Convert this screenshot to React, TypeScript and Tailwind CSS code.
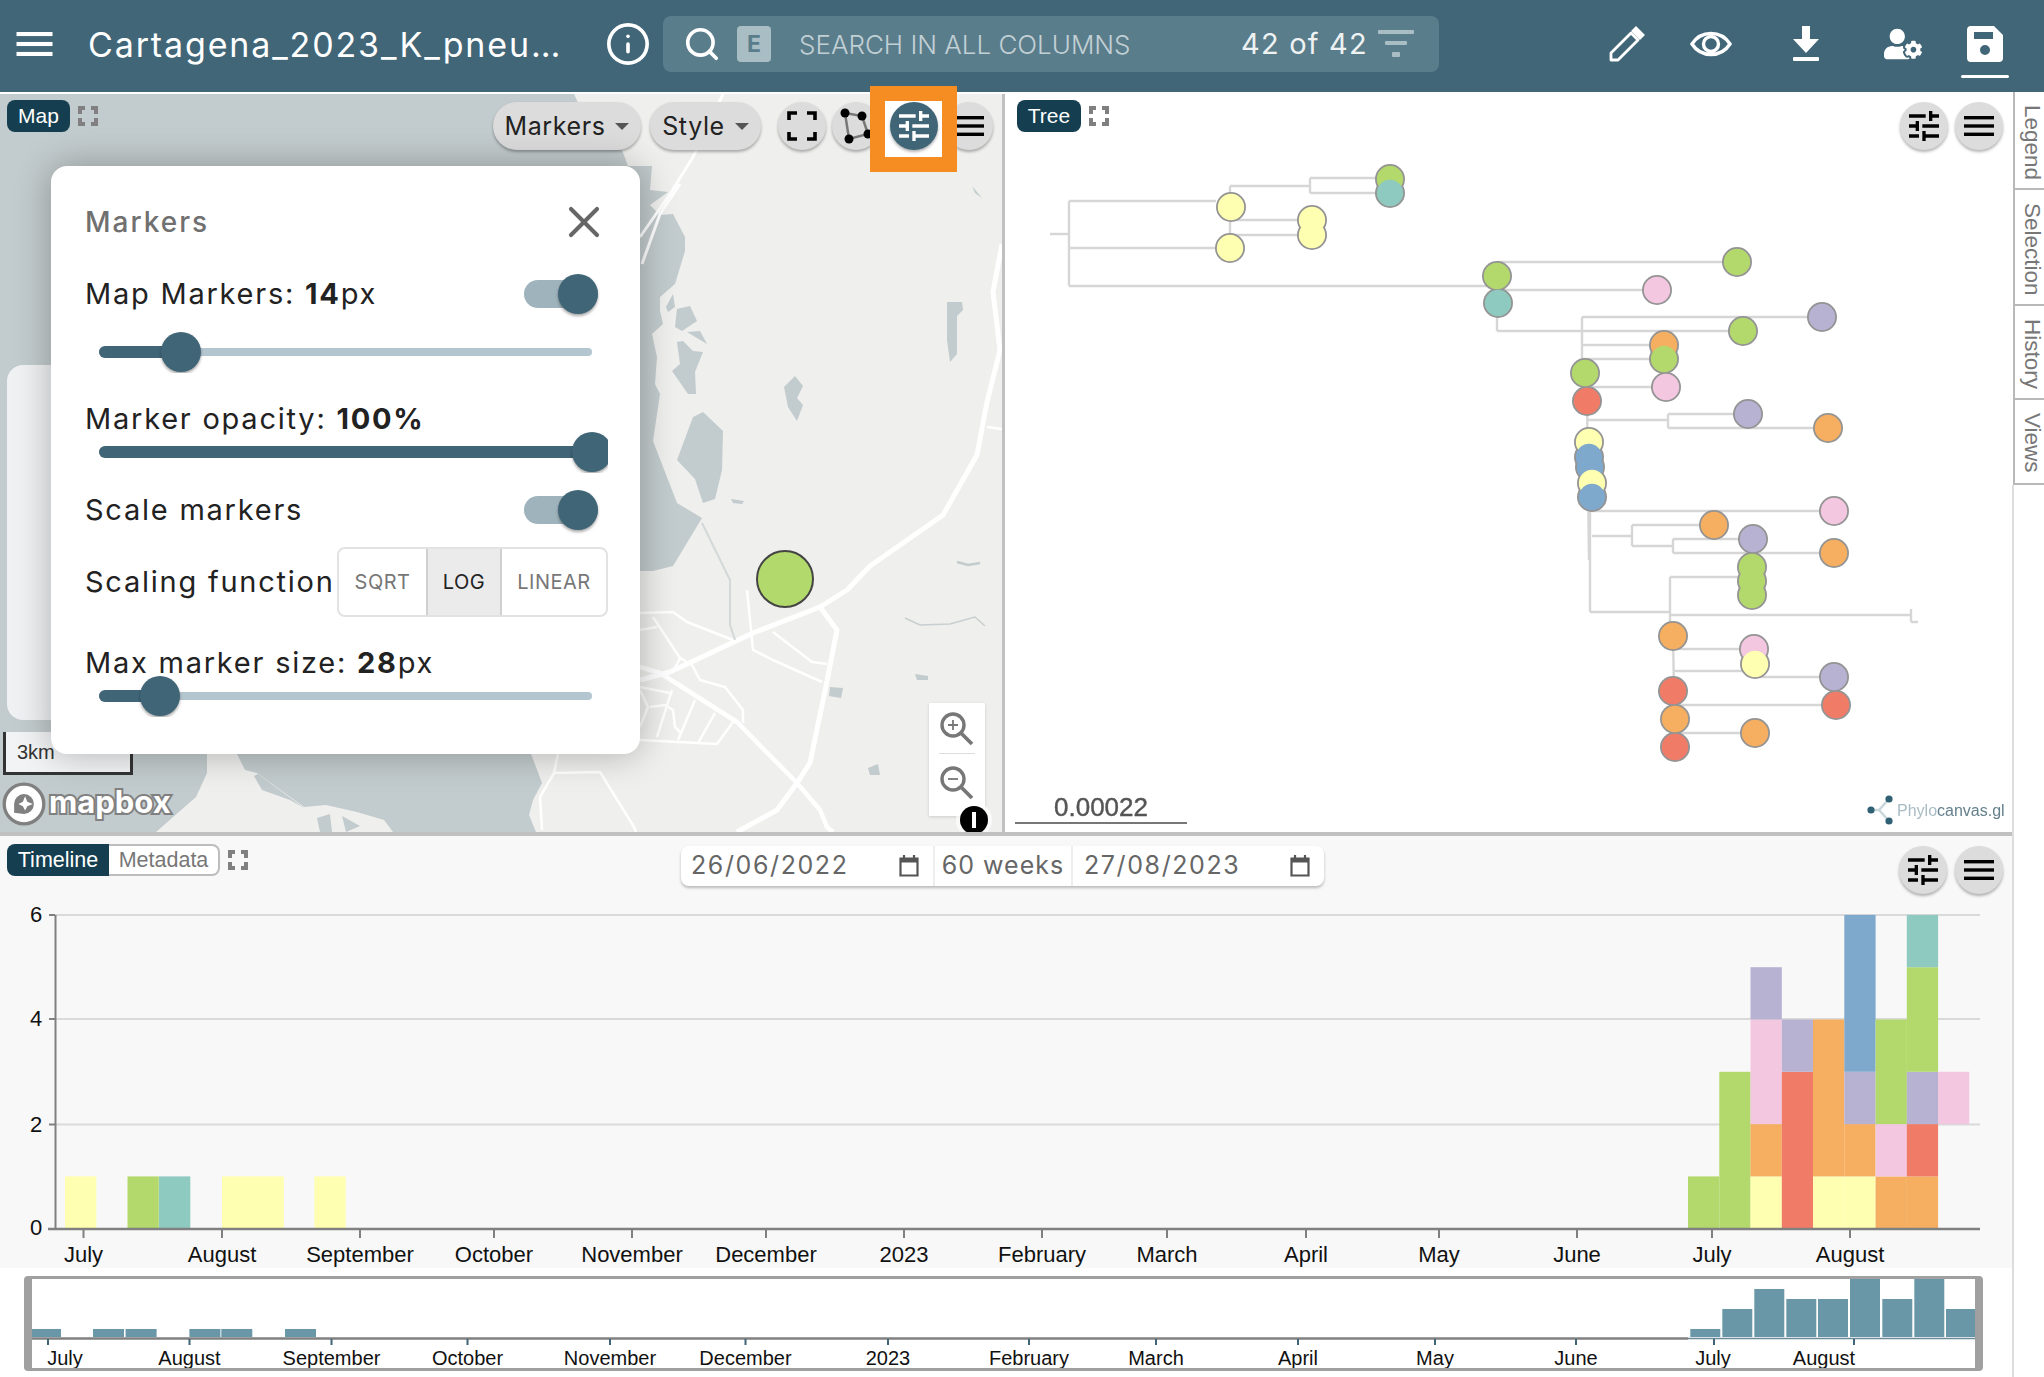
import { Info, Search, X } from 'lucide-react';
import { FaUserCog } from 'react-icons/fa';

const GREEN = '#b3d96c';
const TEAL = '#8ecabf';
const YELLOW = '#ffffb1';
const PURPLE = '#b7b2d2';
const RED = '#f07c68';
const BLUE = '#7fa9cc';
const ORANGE = '#f6af60';
const PINK = '#f4c7e1';

function TuneIcon({ className }: { className?: string }) {
  return (
    <svg viewBox="0 0 24 24" className={className} fill="currentColor">
      <path d="M3 17v2h6v-2H3zM3 5v2h10V5H3zm10 16v-2h8v-2h-8v-2h-2v6h2zM7 9v2H3v2h4v2h2V9H7zm14 4v-2H11v2h10zm-6-4h2V7h4V5h-4V3h-2v6z" />
    </svg>
  );
}

function MenuIcon({ className }: { className?: string }) {
  return (
    <svg viewBox="0 0 30 20" className={className} fill="currentColor">
      <rect x="0" y="0" width="30" height="3.4" />
      <rect x="0" y="8.3" width="30" height="3.4" />
      <rect x="0" y="16.6" width="30" height="3.4" />
    </svg>
  );
}

function ExpandIcon() {
  return (
    <svg viewBox="0 0 20 20" className="h-5 w-5 shrink-0 text-[#808080]" fill="none" stroke="currentColor" strokeWidth="4">
      <path d="M2 8V2h5M13 2h5v6M18 12v6h-5M7 18H2v-6" />
    </svg>
  );
}

function CalendarIcon() {
  return (
    <svg viewBox="0 0 20 22" className="h-[22px] w-5 text-[#555]" fill="none" stroke="currentColor" strokeWidth="2.2">
      <path d="M1.5 3.5h17v17h-17zM1.5 4.5h17" />
      <path d="M1.5 5.5h17" strokeWidth="4" />
      <path d="M5 0v3M15 0v3" />
    </svg>
  );
}

function RoundButton({ children }: { children: React.ReactNode }) {
  return (
    <div className="flex h-12 w-12 shrink-0 items-center justify-center rounded-full bg-[#dcdcdc] text-black shadow-[0_2px_3px_rgba(0,0,0,0.3)]">
      {children}
    </div>
  );
}

function Pill({ label, width }: { label: string; width: string }) {
  return (
    <div className={`flex h-12 items-center justify-center gap-[10px] rounded-full bg-[#dcdcdc] pt-px text-[25px] tracking-[0.6px] text-[#222] shadow-[0_2px_3px_rgba(0,0,0,0.3)] ${width}`}>
      {label}
      <span className="h-0 w-0 border-x-[7px] border-t-[7px] border-x-transparent border-t-[#555]" />
    </div>
  );
}

function Tab({ label, width }: { label: string; width: string }) {
  return <div className={`flex h-8 items-center justify-center rounded-lg bg-[#153f50] font-['Liberation_Sans',sans-serif] text-[21px] text-white ${width}`}>{label}</div>;
}

function Toggle() {
  return (
    <div className="relative ml-auto mr-[10px] h-7 w-[74px] rounded-full bg-[#9fb3bc]">
      <div className="absolute -top-[6px] right-0 h-10 w-10 rounded-full bg-[#3f6577] shadow-[0_2px_3px_rgba(0,0,0,0.35)]" />
    </div>
  );
}

function Slider({ thumb, className }: { thumb: number; className?: string }) {
  return (
    <div className={`relative h-[42px] w-[523px] overflow-hidden ${className ?? ''}`}>
      <div className="absolute left-[14px] top-[17px] h-2 w-[493px] rounded-full bg-[#b3c5ce]" />
      <div className="absolute left-[14px] top-[15px] h-3 rounded-full bg-[#3f6577]" style={{ width: thumb }} />
      <div className="absolute top-px h-10 w-10 rounded-full bg-[#3f6577] shadow-[0_2px_3px_rgba(0,0,0,0.35)]" style={{ left: thumb - 6 }} />
    </div>
  );
}

function MarkersPanel() {
  return (
    <div className="absolute left-[51px] top-[72px] flex w-[589px] flex-col rounded-2xl bg-white pb-[37px] pl-[34px] pr-[32px] pt-9 text-[29px] tracking-[1.76px] text-[#222] shadow-[0_0_36px_rgba(0,0,0,0.28)]">
      <div className="flex h-10 items-center justify-between text-[28px] font-medium tracking-[2px] text-[#707070]">
        Markers
        <X className="-my-[6px] -mr-[2px] h-[52px] w-[52px] shrink-0 text-[#666]" strokeWidth={1.9} />
      </div>
      <div className="mt-[39px] flex h-[26px] items-center">
        <span>Map Markers: <b>14</b>px</span>
        <Toggle />
      </div>
      <Slider thumb={82} className="mt-6" />
      <div className="mt-[33px] flex h-[26px] items-center">
        <span>Marker opacity: <b>100%</b></span>
      </div>
      <Slider thumb={493} className="-mt-px" />
      <div className="mt-6 flex h-[26px] items-center">
        <span>Scale markers</span>
        <Toggle />
      </div>
      <div className="mt-6 flex h-[70px] items-center">
        <span className="w-[252px] shrink-0 whitespace-nowrap">Scaling function</span>
        <div className="flex h-[70px] w-[271px] rounded-lg border-2 border-[#e2e2e2] text-[20px] tracking-[0.5px] text-[#777]">
          <div className="flex w-[87px] items-center justify-center">SQRT</div>
          <div className="flex w-[76px] items-center justify-center border-x-2 border-[#d0d0d0] bg-[#ebebeb] text-[#222]">LOG</div>
          <div className="flex flex-1 items-center justify-center">LINEAR</div>
        </div>
      </div>
      <div className="mt-[33px] flex h-[26px] items-center">
        <span>Max marker size: <b>28</b>px</span>
      </div>
      <Slider thumb={61} className="-mt-px" />
    </div>
  );
}

const LAKES = [
  '677,460 693,417 703,412 723,431 722,470 715,499 703,503 695,479',
  '677,342 683,341 693,351 703,352 695,372 696,394 688,394 672,371 680,364',
  '675,327 677,309 690,306 697,321 682,331',
  '666,307 673,294 675,307 668,312',
  '687,332 700,331 707,344',
  '784,387 795,376 803,386 797,398 803,405 797,421 788,407',
  '947,302 962,302 963,310 957,316 957,354 950,362 947,340',
  '731,499 744,501 742,504 733,503',
  '830,687 843,688 841,698 829,696',
  '868,768 878,764 880,775 870,775',
  '972,186 982,198 975,193',
  '915,674 928,676 928,680 917,680',
  '254,776 258,774 304,808 290,800 262,790',
  '317,818 330,814 332,832 320,832',
  '342,816 360,826 346,832',
];

const THIN_ROADS = [
  '640,613 673,612 687,622 733,640',
  '653,617 680,658',
  '673,672 680,658 692,665 700,680 725,687 743,710 743,723',
  '747,590 750,620 753,650 773,660 822,682',
  '773,632 812,662 827,664',
  '640,740 717,744 733,722',
  '672,690 657,737',
  '695,700 678,740',
  '715,713 698,743',
  '650,707 665,705 673,710 675,727 680,732',
  '640,687 670,693',
  '640,630 657,627',
  '640,690 648,707 640,727',
  '987,427 1002,429',
  '558,754 554,773 540,797 542,830',
  '554,773 600,772 634,827 636,832',
];

function MapCanvas() {
  return (
    <svg viewBox="0 94 1002 738" className="absolute inset-0 h-full w-full">
      <rect x="0" y="94" width="1002" height="738" fill="#efefed" />
      <path d="M0 94H574L600 150L622 150L628 166L652 166L650 190L668 192L650 205L660 215L673 214L685 237L685 251L675 284L660 297L660 311L663 324L652 334L657 357L655 384L660 394L653 441L677 503L702 518L673 566L653 571L640 571V700L531 754L536 767L542 783L533 800L529 815L536 832H0Z" fill="#c2cbcd" />
      <polygon points="207,754 237,754 245,770 257,773 304,807 326,805 357,812 384,820 393,832 156,832 196,797 207,773" fill="#efefed" />
      {LAKES.map((points) => (
        <polygon key={points} points={points} fill="#c2cbcd" />
      ))}
      <g fill="none" stroke="#fff" strokeLinejoin="round">
        <polyline points="1002,244 993,292 1000,350 987,402 977,455 943,515 870,566 847,590 820,607 753,633 670,672 640,680" strokeWidth="5" />
        <polyline points="820,607 837,630 827,681 810,763 797,783 777,810 737,832" strokeWidth="5" />
        <polyline points="640,667 660,673 737,722 797,783 820,810 827,827 833,832" strokeWidth="4.5" />
        <polyline points="723,94 693,157 670,194 640,237" strokeWidth="3" />
        <polyline points="680,184 660,214 642,264" strokeWidth="3" />
        {THIN_ROADS.map((points) => (
          <polyline key={points} points={points} strokeWidth="2.5" />
        ))}
      </g>
      <polyline points="702,523 730,580 730,625 735,640" fill="none" stroke="#d3d8d8" strokeWidth="2" />
      <polyline points="905,618 920,625 950,624 975,617 985,626" fill="none" stroke="#c8cfd0" strokeWidth="1.5" />
      <polyline points="957,562 968,565 980,563" fill="none" stroke="#c2cbcd" strokeWidth="2.5" />
      <circle cx="785" cy="579" r="28" fill="#b2d96b" stroke="#444" strokeWidth="2" />
    </svg>
  );
}

const BRANCHES = [
  [1050, 234, 1069, 234], [1069, 201, 1069, 286], [1069, 201, 1216, 201], [1069, 248, 1216, 248], [1069, 286, 1497, 286],
  [1230, 186, 1230, 248], [1230, 186, 1310, 186], [1310, 178, 1310, 193], [1310, 178, 1390, 178], [1310, 193, 1390, 193],
  [1230, 220, 1311, 220], [1230, 235, 1311, 235], [1497, 262, 1737, 262], [1497, 290, 1657, 290], [1497, 290, 1497, 331],
  [1497, 331, 1743, 331], [1582, 317, 1582, 372], [1582, 317, 1822, 317], [1582, 345, 1664, 345], [1582, 359, 1664, 359],
  [1585, 387, 1665, 387], [1587, 400, 1589, 560], [1587, 420, 1668, 420], [1668, 414, 1668, 428], [1668, 414, 1748, 414],
  [1668, 428, 1828, 428], [1592, 511, 1834, 511], [1590, 498, 1590, 612], [1592, 536, 1632, 536], [1632, 525, 1632, 546],
  [1632, 525, 1714, 525], [1632, 546, 1673, 546], [1673, 539, 1673, 553], [1673, 539, 1753, 539], [1673, 553, 1834, 553],
  [1590, 612, 1670, 612], [1670, 577, 1670, 645], [1670, 577, 1752, 577], [1670, 615, 1911, 615], [1911, 609, 1911, 622],
  [1911, 622, 1918, 622], [1673, 636, 1675, 747], [1673, 649, 1754, 649], [1673, 671, 1755, 671], [1755, 677, 1834, 677],
  [1673, 705, 1835, 705], [1675, 733, 1754, 733],
];

const NODES: [number, number, string][] = [
  [1231, 207, YELLOW], [1230, 248, YELLOW], [1312, 220, YELLOW], [1312, 235, YELLOW], [1390, 179, GREEN], [1390, 193, TEAL],
  [1497, 276, GREEN], [1498, 303, TEAL], [1737, 262, GREEN], [1657, 290, PINK], [1822, 317, PURPLE], [1743, 331, GREEN],
  [1664, 345, ORANGE], [1664, 359, GREEN], [1585, 373, GREEN], [1587, 401, RED], [1666, 387, PINK], [1748, 414, PURPLE],
  [1828, 428, ORANGE], [1589, 442, YELLOW], [1589, 457, BLUE], [1590, 467, BLUE], [1592, 483, YELLOW], [1592, 497, BLUE],
  [1834, 511, PINK], [1714, 525, ORANGE], [1753, 539, PURPLE], [1834, 553, ORANGE], [1752, 567, GREEN], [1752, 581, GREEN],
  [1752, 595, GREEN], [1673, 636, ORANGE], [1754, 649, PINK], [1755, 664, YELLOW], [1834, 677, PURPLE], [1836, 705, RED],
  [1673, 691, RED], [1675, 719, ORANGE], [1755, 733, ORANGE], [1675, 747, RED],
];

function TreeCanvas() {
  return (
    <svg viewBox="1005 94 1007 738" className="absolute inset-0 h-full w-full blur-[0.6px]">
      <g stroke="#d6d6d6" strokeWidth="2.4">
        {BRANCHES.map(([x1, y1, x2, y2]) => (
          <line key={`${x1}-${y1}-${x2}-${y2}`} x1={x1} y1={y1} x2={x2} y2={y2} />
        ))}
      </g>
      {/* outlines first so touching nodes merge into one shape */}
      {NODES.map(([cx, cy]) => (
        <circle key={`${cx}-${cy}`} cx={cx} cy={cy} r="15" fill="#949494" />
      ))}
      {NODES.map(([cx, cy, fill]) => (
        <circle key={`${cx}-${cy}`} cx={cx} cy={cy} r="13.2" fill={fill} />
      ))}
      <text x="1054" y="816" className="font-['Liberation_Sans',sans-serif] text-[26px]" fill="#555" stroke="#555" strokeWidth="0.4">0.00022</text>
      <line x1="1015" y1="823" x2="1187" y2="823" stroke="#777" strokeWidth="2" />
      <g fill="none" stroke="#c9d6da" strokeWidth="2.5">
        <path d="M1871 810h8l10-11M1879 810l10 11" />
      </g>
      <circle cx="1871" cy="810" r="3.6" fill="#2f6074" />
      <circle cx="1889" cy="799" r="3.6" fill="#2f6074" />
      <circle cx="1889" cy="821" r="3.6" fill="#2f6074" />
      <text x="1897" y="816" className="font-['Liberation_Sans',sans-serif] text-[16px]" fill="#a9bcc4">
        Phylo<tspan fill="#64808c">canvas.gl</tspan>
      </text>
    </svg>
  );
}

const BIN_X = [1688, 1719.3, 1750.5, 1781.8, 1813, 1844.3, 1875.6, 1906.8, 1938];
const BARS: [number, number, number, string][] = [
  [65, 0, 1, YELLOW], [127.5, 0, 1, GREEN], [159, 0, 1, TEAL], [222, 0, 1, YELLOW], [252.5, 0, 1, YELLOW], [314.4, 0, 1, YELLOW],
  [BIN_X[0], 0, 1, GREEN], [BIN_X[1], 0, 3, GREEN],
  [BIN_X[2], 0, 1, YELLOW], [BIN_X[2], 1, 2, ORANGE], [BIN_X[2], 2, 4, PINK], [BIN_X[2], 4, 5, PURPLE],
  [BIN_X[3], 0, 3, RED], [BIN_X[3], 3, 4, PURPLE],
  [BIN_X[4], 0, 1, YELLOW], [BIN_X[4], 1, 4, ORANGE],
  [BIN_X[5], 0, 1, YELLOW], [BIN_X[5], 1, 2, ORANGE], [BIN_X[5], 2, 3, PURPLE], [BIN_X[5], 3, 6, BLUE],
  [BIN_X[6], 0, 1, ORANGE], [BIN_X[6], 1, 2, PINK], [BIN_X[6], 2, 4, GREEN],
  [BIN_X[7], 0, 1, ORANGE], [BIN_X[7], 1, 2, RED], [BIN_X[7], 2, 3, PURPLE], [BIN_X[7], 3, 5, GREEN], [BIN_X[7], 5, 6, TEAL],
  [BIN_X[8], 2, 3, PINK],
];

const barY = (value: number) => 1228.7 - 52.3 * value;

const MAIN_TICKS: [number, string][] = [
  [83.5, 'July'], [222, 'August'], [360, 'September'], [494, 'October'], [632, 'November'], [766, 'December'], [904, '2023'],
  [1042, 'February'], [1167, 'March'], [1306, 'April'], [1439, 'May'], [1577, 'June'], [1712, 'July'], [1850, 'August'],
];

function TimelineChart() {
  return (
    <svg viewBox="0 836 2012 432" className="absolute inset-0 h-full w-full font-['Liberation_Sans',sans-serif] text-[22px]">
      <g stroke="#dadada" strokeWidth="2">
        <line x1="55" y1="915" x2="1980" y2="915" />
        <line x1="55" y1="1019" x2="1980" y2="1019" />
        <line x1="55" y1="1124.5" x2="1980" y2="1124.5" />
      </g>
      {BARS.map(([x, from, to, fill]) => (
        <rect key={`${x}-${from}`} x={x} y={barY(to)} width="31.3" height={(to - from) * 52.3} fill={fill} />
      ))}
      <g stroke="#808080" strokeWidth="2">
        <line x1="55.5" y1="915" x2="55.5" y2="1229" />
        <line x1="48" y1="1229" x2="1980" y2="1229" strokeWidth="2.5" />
        <line x1="49" y1="915" x2="55" y2="915" />
        <line x1="49" y1="1019" x2="55" y2="1019" />
        <line x1="49" y1="1124.5" x2="55" y2="1124.5" />
        {MAIN_TICKS.map(([x, label]) => (
          <line key={`${x}${label}`} x1={x} y1="1229" x2={x} y2="1238" />
        ))}
      </g>
      {[['6', 915], ['4', 1019], ['2', 1124.5], ['0', 1228]].map(([label, y]) => (
        <text key={label} x="30" y={Number(y) + 7} fill="#111">{label}</text>
      ))}
      {MAIN_TICKS.map(([x, label]) => (
        <text key={`${x}${label}`} x={x} y="1262" textAnchor="middle" fill="#111">{label}</text>
      ))}
    </svg>
  );
}

const NAV_BARS: [number, number][] = [
  [31, 30], [93, 31], [125.6, 31], [189.4, 31], [221.3, 31], [285, 31],
];
const NAV_RIGHT: [number, number][] = [
  [1690.3, 8], [1722.3, 28], [1754.3, 48], [1786.3, 38], [1818, 38], [1850, 58], [1882.3, 38], [1914.3, 58], [1946, 28],
];
const NAV_TICKS: [number, number, string][] = [
  [48, 65, 'July'], [189.5, 189.5, 'August'], [331.5, 331.5, 'September'], [467.5, 467.5, 'October'], [610, 610, 'November'],
  [745.5, 745.5, 'December'], [888, 888, '2023'], [1029, 1029, 'February'], [1156, 1156, 'March'], [1298, 1298, 'April'],
  [1435, 1435, 'May'], [1576, 1576, 'June'], [1714, 1713, 'July'], [1854, 1824, 'August'],
];

function NavChart() {
  return (
    <svg viewBox="32 1279 1943 89" className="block h-[89px] w-[1943px] font-['Liberation_Sans',sans-serif] text-[20px]">
      <line x1="32" y1="1338.5" x2="1688" y2="1338.5" stroke="#808080" strokeWidth="2.5" />
      <line x1="1688" y1="1338.5" x2="1975" y2="1338.5" stroke="#6b8a98" strokeWidth="1.5" />
      {NAV_BARS.map(([x, width]) => (
        <rect key={x} x={x} y="1329" width={width} height="8" fill="#6a97a8" />
      ))}
      {NAV_RIGHT.map(([x, height]) => (
        <rect key={x} x={x} y={1337 - height} width="30" height={height} fill="#6a97a8" />
      ))}
      {NAV_TICKS.map(([tick, x, label]) => (
        <g key={`${tick}${label}`}>
          <line x1={tick} y1="1339" x2={tick} y2="1345" stroke="#3f6577" strokeWidth="2" />
          <text x={x} y="1365" textAnchor="middle" fill="#111">{label}</text>
        </g>
      ))}
    </svg>
  );
}

function Header() {
  return (
    <header className="flex h-[92px] shrink-0 items-center bg-[#406678] pb-1 pl-4 text-white">
      <MenuIcon className="h-6 w-[37px] shrink-0" />
      <div className="ml-[35px] w-[473px] shrink-0 whitespace-nowrap text-[34px] tracking-[1.86px]">Cartagena_2023_K_pneu…</div>
      <Info className="ml-[47px] h-[46px] w-[46px] shrink-0 -translate-x-[3px]" strokeWidth={1.9} />
      <div className="ml-[9px] flex h-14 w-[776px] shrink-0 items-center rounded-lg bg-[#5a7d8b] pl-5">
        <Search className="h-[38px] w-[38px] shrink-0" strokeWidth={2.3} />
        <div className="ml-4 flex h-9 w-[34px] shrink-0 items-center justify-center rounded bg-[#a9bdc4] text-[23px] font-bold text-[#5a7d8b]">E</div>
        <div className="ml-7 w-[442px] shrink-0 whitespace-nowrap text-[26px] font-light text-[#c2d0d5]">SEARCH IN ALL COLUMNS</div>
        <div className="w-[126px] shrink-0 whitespace-nowrap text-[29px] tracking-[1.2px] text-[#eef2f3]">42 of 42</div>
        <svg viewBox="0 0 36 28" className="ml-[11px] h-7 w-9 shrink-0 text-[#a9bdc4]" fill="currentColor">
          <rect x="0" y="0" width="36" height="4" rx="1" />
          <rect x="7" y="11" width="22" height="4" rx="1" />
          <rect x="14" y="22" width="8" height="5" rx="1" />
        </svg>
      </div>
      <svg viewBox="0 0 36 36" className="ml-[170px] h-9 w-9 shrink-0" fill="none" stroke="currentColor" strokeWidth="2.8">
        <path d="M2 34V27L22 7L29 14L9 34Z" strokeLinejoin="round" />
        <path d="M27 2L34 9L31 12L24 5Z" fill="currentColor" />
      </svg>
      <svg viewBox="0 0 42 30" className="ml-[45px] h-[30px] w-[42px] shrink-0" fill="none" stroke="currentColor" strokeWidth="3.4">
        <path d="M2 15C11 1 31 1 40 15C31 29 11 29 2 15Z" />
        <circle cx="21" cy="15" r="7.5" />
      </svg>
      <svg viewBox="0 0 26 36" className="ml-[61px] h-9 w-[26px] shrink-0" fill="currentColor">
        <path d="M9 0H17V13H26L13 27L0 13H9Z" />
        <rect x="0" y="31" width="26" height="4" rx="1" />
      </svg>
      <FaUserCog className="ml-[65px] h-[36px] w-[38px] shrink-0" />
      <div className="relative ml-[45px] h-9 w-9 shrink-0">
        <svg viewBox="0 0 36 36" className="h-9 w-9" fill="currentColor">
          <path fillRule="evenodd" d="M4 0H27L36 9V32A4 4 0 0 1 32 36H4A4 4 0 0 1 0 32V4A4 4 0 0 1 4 0ZM7 6V13H26V6ZM18 19A5 5 0 1 0 18 29A5 5 0 1 0 18 19Z" />
        </svg>
        <div className="absolute -left-[6px] top-[49px] h-[3px] w-12 rounded-sm bg-white" />
      </div>
    </header>
  );
}

function SideTab({ label, height }: { label: string; height: string }) {
  return (
    <div className={`ml-px flex justify-center border-b-2 border-l-2 border-[#b9b9b9] pl-[5px] pt-[13px] ${height}`}>
      <span className="font-['Liberation_Sans',sans-serif] text-[22.5px] leading-none text-[#777] [writing-mode:vertical-rl]">{label}</span>
    </div>
  );
}

export default function App() {
  return (
    <div className="relative flex h-[1377px] w-[2044px] flex-col overflow-hidden bg-white font-['Inter',sans-serif]">
      <Header />
      <div className="flex min-h-0 flex-1">
        <div className="flex w-[2012px] shrink-0 flex-col pt-[2px]">
          <div className="flex h-[742px] shrink-0 border-b-4 border-[#c0c0c0]">
            <section className="relative w-[1002px] shrink-0 overflow-hidden">
              <MapCanvas />
              <div className="absolute left-[7px] top-[6px] flex gap-2">
                <Tab label="Map" width="w-[63px]" />
                <div className="mt-[6px]"><ExpandIcon /></div>
              </div>
              <div className="absolute left-[493px] top-2 flex">
                <Pill label="Markers" width="w-[148px]" />
                <div className="ml-[9px]"><Pill label="Style" width="w-[111px]" /></div>
                <div className="ml-[17px]">
                  <RoundButton>
                    <svg viewBox="0 0 30 30" className="h-[30px] w-[30px]" fill="none" stroke="currentColor" strokeWidth="3.6">
                      <path d="M2 9V2h8M20 2h8v7M28 21v7h-8M10 28H2v-7" />
                    </svg>
                  </RoundButton>
                </div>
                <div className="ml-[6px]">
                  <RoundButton>
                    <svg viewBox="0 0 36 36" className="h-9 w-9">
                      <path d="M7 5L24 8L30 26L11 31Z" fill="none" stroke="#777" strokeWidth="2.5" />
                      <circle cx="7" cy="5" r="4.5" /><circle cx="24" cy="8" r="4.5" /><circle cx="30" cy="26" r="4.5" /><circle cx="11" cy="31" r="4.5" />
                    </svg>
                  </RoundButton>
                </div>
                <div className="ml-[65px]">
                  <RoundButton><MenuIcon className="h-5 w-[30px]" /></RoundButton>
                </div>
              </div>
              <div className="absolute left-[7px] top-[271px] h-[355px] w-[60px] rounded-2xl bg-[#eff1f3]" />
              <div className="absolute left-[3px] top-[638px] flex h-[43px] w-[130px] items-center border-x-[3px] border-b-[3px] border-[#333] bg-[#f2f3f4] pl-[11px] font-['Liberation_Sans',sans-serif] text-[20px] text-[#333]">3km</div>
              <MarkersPanel />
              <div className="absolute left-[2px] top-[688px] flex items-center">
                <svg viewBox="0 0 40 40" className="h-11 w-11 shrink-0">
                  <circle cx="20" cy="20" r="18" fill="#fff" stroke="#808080" strokeWidth="3" />
                  <path d="M11 28V20A9 9 0 1 1 20 29Z" fill="#808080" />
                  <path d="M21 13L23 18L28 20L23 22L21 26L19 22L15 20L19 18Z" fill="#fff" />
                </svg>
                <svg viewBox="0 0 130 44" className="h-11 w-[130px]">
                  <text x="3" y="31" stroke="#808080" strokeWidth="4" fill="#fff" paintOrder="stroke" className="text-[31px] font-bold">mapbox</text>
                </svg>
              </div>
              <div className="absolute left-[929px] top-[609px] flex h-[113px] w-14 flex-col items-center bg-white shadow-[0_1px_3px_rgba(0,0,0,0.15)]">
                <svg viewBox="0 0 34 34" className="mt-[9px] h-[34px] w-[34px]" fill="none" stroke="#777" strokeWidth="3.4">
                  <circle cx="13" cy="13" r="11" /><path d="M21 21L32 32" strokeWidth="3.8" /><path d="M8 13h10M13 8v10" strokeWidth="1.8" />
                </svg>
                <div className="mt-[7px] h-px w-9 bg-[#ddd]" />
                <svg viewBox="0 0 34 34" className="mt-[12px] h-[34px] w-[34px]" fill="none" stroke="#777" strokeWidth="3.4">
                  <circle cx="13" cy="13" r="11" /><path d="M21 21L32 32" strokeWidth="3.8" /><path d="M8 13h10" strokeWidth="1.8" />
                </svg>
              </div>
              <div className="absolute left-[960px] top-[712px] flex h-7 w-7 items-center justify-center rounded-full bg-black ring-4 ring-white/70">
                <div className="h-4 w-1 bg-white" />
              </div>
            </section>
            <section className="relative flex-1 border-l-[3px] border-[#c0c0c0]">
              <TreeCanvas />
              <div className="absolute left-[12px] top-[6px] flex gap-2">
                <Tab label="Tree" width="w-16" />
                <div className="mt-[6px]"><ExpandIcon /></div>
              </div>
              <div className="absolute right-[9px] top-2 flex gap-[7px]">
                <RoundButton><TuneIcon className="h-10 w-10" /></RoundButton>
                <RoundButton><MenuIcon className="h-5 w-[30px]" /></RoundButton>
              </div>
            </section>
          </div>
          <section className="relative h-[432px] shrink-0 bg-[#f8f8f8]">
            <TimelineChart />
            <div className="absolute inset-x-0 top-0 flex items-start pl-[7px] pr-[9px] pt-2">
              <div className="flex h-8 w-[213px] shrink-0 font-['Liberation_Sans',sans-serif] text-[21.5px]">
                <div className="flex w-[102px] items-center justify-center rounded-l-lg bg-[#153f50] text-white">Timeline</div>
                <div className="flex flex-1 items-center justify-center rounded-r-lg border-2 border-l-0 border-[#bdbdbd] bg-white text-[#777]">Metadata</div>
              </div>
              <div className="ml-2 mt-[6px]"><ExpandIcon /></div>
              <div className="ml-[433px] mt-[2px] flex h-10 w-[643px] shrink-0 items-center rounded-lg bg-white text-[25px] tracking-[1.6px] text-[#666] shadow-[0_2px_3px_rgba(0,0,0,0.25)]">
                <div className="flex h-full w-[254px] items-center justify-between border-r-2 border-[#eee] pl-[10px] pr-[14px]">26/06/2022<CalendarIcon /></div>
                <div className="flex h-full w-[138px] items-center justify-center whitespace-nowrap border-r-2 border-[#eee] tracking-[1px]">60 weeks</div>
                <div className="flex h-full flex-1 items-center justify-between pl-[11px] pr-[14px]">27/08/2023<CalendarIcon /></div>
              </div>
              <div className="ml-auto mt-[2px] flex gap-2">
                <RoundButton><TuneIcon className="h-10 w-10" /></RoundButton>
                <RoundButton><MenuIcon className="h-5 w-[30px]" /></RoundButton>
              </div>
            </div>
          </section>
          <div className="h-[109px] shrink-0 bg-white pl-6 pt-2">
            <div className="h-[95px] w-[1959px] rounded border-x-8 border-y-[3px] border-[#a0a0a0]">
              <NavChart />
            </div>
          </div>
        </div>
        <aside className="flex w-8 shrink-0 flex-col">
          <SideTab label="Legend" height="h-[98px]" />
          <SideTab label="Selection" height="h-[116px]" />
          <SideTab label="History" height="h-[94px]" />
          <SideTab label="Views" height="h-[85px]" />
          <div className="flex-1 border-l-2 border-[#ddd]" />
        </aside>
      </div>
      <div className="absolute left-[870px] top-[86px] flex h-[86px] w-[87px] justify-center border-[15px] border-[#f58d22] bg-white pt-px">
        <div className="flex h-12 w-12 shrink-0 items-center justify-center rounded-full bg-[#3f6577] text-white shadow-[0_2px_3px_rgba(0,0,0,0.3)]">
          <TuneIcon className="h-10 w-10" />
        </div>
      </div>
    </div>
  );
}
